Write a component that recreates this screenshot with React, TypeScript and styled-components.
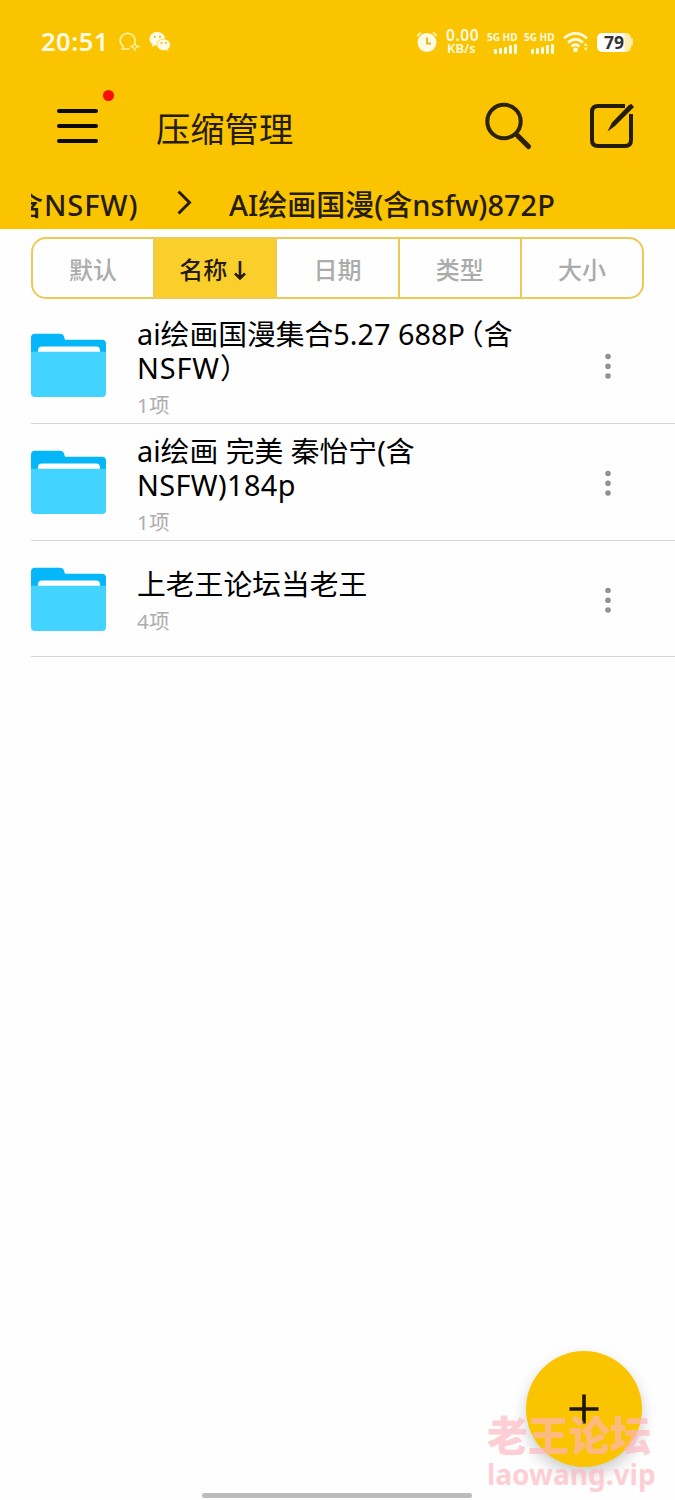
import React from 'react';
import styled, { createGlobalStyle } from 'styled-components';

const Global = createGlobalStyle`
  * { box-sizing: border-box; }
  body { margin: 0; background: #fefefe; }
`;
const Screen = styled.div`
  position: relative;
  width: 675px;
  height: 1500px;
  overflow: hidden;
  background: #fefefe;
  font-family: 'Noto Sans', 'Noto Sans CJK SC', sans-serif;
  color: #000;
`;
const Header = styled.header`
  height: 229px;
  background: #fac400;
  color: #251c05;
`;
const StatusBar = styled.div`
  height: 84px;
  padding: 0 41px 0 41px;
  display: flex;
  align-items: center;
  color: #fffbe2;
`;
const Clock = styled.div`
  font-size: 25.5px;
  font-weight: 600;
  line-height: 30px;
  width: 78px;
  letter-spacing: 0.5px;
  padding-bottom: 2px;
`;
const StatusIcon = styled.svg<{ $gap?: number }>`
  display: block;
  flex: none;
  margin-right: ${p => p.$gap ?? 0}px;
`;
const Speed = styled.div`
  width: 41px;
  font-weight: 600;
  line-height: 13px;
  display: flex;
  flex-direction: column;
`;
const SpeedValue = styled.span`
  font-size: 15.5px;
  letter-spacing: 0.6px;
`;
const SpeedUnit = styled.span`
  font-size: 13px;
  padding-left: 1px;
`;
const Signal = styled.div`
  width: 37px;
  font-size: 10px;
  font-weight: 700;
  line-height: 13px;
  white-space: nowrap;
`;
const Bars = styled.div`
  display: flex;
  align-items: flex-end;
  gap: 2px;
  height: 10px;
  padding-left: 7px;
`;
const Bar = styled.i<{ $h: number }>`
  width: 3px;
  height: ${p => p.$h}px;
  border-radius: 1px;
  background: #fffbe2;
`;
const Battery = styled.div`
  width: 34px;
  height: 19px;
  border-radius: 5px;
  background: linear-gradient(90deg, #fff 75%, #fdeeb0 84%);
  color: #333;
  font-size: 17.5px;
  font-weight: 700;
  line-height: 19px;
  padding-left: 7px;
`;
const BatteryTip = styled.i`
  width: 2px;
  height: 8px;
  border-radius: 0 2px 2px 0;
  background: #fdeeb0;
`;
const Toolbar = styled.div`
  height: 84px;
  display: flex;
  align-items: center;
  padding-left: 55px;
`;
const MenuButton = styled.div`
  position: relative;
  width: 101px;
  height: 84px;
  display: flex;
  align-items: center;
`;
const Dot = styled.i`
  position: absolute;
  left: 48px;
  top: 6px;
  width: 11px;
  height: 11px;
  border-radius: 50%;
  background: #f80d0d;
`;
const Title = styled.h1`
  margin: 5px 0 0;
  width: 328px;
  font-size: 34.3px;
  font-weight: 400;
  line-height: 44px;
`;
const Crumbs = styled.nav`
  margin-left: 31px;
  height: 61px;
  padding-top: 19px;
  display: flex;
  overflow: hidden;
  white-space: nowrap;
`;
const Crumb = styled.span<{ $shift?: number; $w: number; $track?: number }>`
  flex: none;
  width: ${p => p.$w}px;
  margin-left: ${p => p.$shift ?? 0}px;
  letter-spacing: ${p => p.$track ?? 0}px;
  font-size: 29px;
  font-weight: 500;
  line-height: 36px;
`;
const Tabs = styled.div`
  margin: 8px 31px 0 31px;
  height: 62px;
  display: flex;
  border: 2px solid #ecca55;
  border-radius: 15px;
  overflow: hidden;
`;
const Tab = styled.div<{ $active?: boolean }>`
  flex: 1;
  display: flex;
  align-items: center;
  justify-content: center;
  padding-top: 3px;
  font-size: 24px;
  line-height: 34px;
  font-weight: 500;
  color: ${p => (p.$active ? '#251c05' : '#ababab')};
  background: ${p => (p.$active ? '#fbcf2b' : 'transparent')};
  & + & { border-left: 2px solid #ecca55; }
`;
const List = styled.div`
  padding: 8px 0 0 31px;
`;
const Row = styled.div<{ $h: number }>`
  height: ${p => p.$h}px;
  display: flex;
  align-items: center;
  border-bottom: 1.5px solid #d5d5d5;
`;
const Info = styled.div`
  width: 467px;
  margin-left: 31px;
  padding-top: 8px;
`;
const Name = styled.div<{ $track?: number }>`
  font-size: 28.8px;
  line-height: 34px;
  letter-spacing: ${p => p.$track ?? 0}px;
  white-space: nowrap;
`;
const WideParen = styled.span`
  margin-left: -10px;
`;
const Count = styled.div`
  margin-top: 4px;
  font-size: 20.5px;
  line-height: 33px;
  letter-spacing: 0.3px;
  color: #adadad;
`;
const Fab = styled.button`
  position: absolute;
  left: 526px;
  top: 1351px;
  width: 116px;
  height: 116px;
  padding: 0;
  border: 0;
  border-radius: 50%;
  background: #fac400;
  box-shadow: 0 7px 15px rgba(0, 0, 0, 0.2);
  display: flex;
  align-items: center;
  justify-content: center;
`;
const Watermark = styled.div`
  position: absolute;
  left: 487px;
  top: 1409px;
  color: rgba(255, 182, 192, 0.68);
  font-weight: 700;
  white-space: nowrap;
`;
const MarkName = styled.div`
  font-family: 'Noto Sans CJK SC', sans-serif;
  font-weight: 900;
  font-size: 41px;
  line-height: 48px;
`;
const MarkSite = styled.div`
  font-size: 28px;
  line-height: 34px;
`;
const HomeBar = styled.div`
  position: absolute;
  left: 202px;
  top: 1493px;
  width: 270px;
  height: 5px;
  border-radius: 3px;
  background: #bcbcbc;
`;

const Folder = () => (
  <svg width="75" height="64" viewBox="0 0 75 64">
    <path d="M0 22V4.500Q0 .7 4 .7H29Q32 .7 33 3.500L34 6.700H71Q75 6.700 75 10.500V22Z" fill="#05b7f9" />
    <path d="M7 20V17.500Q7 13.500 11 13.500H65Q69 13.500 69 17.500V20Z" fill="#fff" />
    <path d="M0 18.700H75V60Q75 64 71 64H4Q0 64 0 60Z" fill="#42d3ff" />
  </svg>
);
const More = () => (
  <svg width="8" height="32" viewBox="0 0 8 32" fill="#919191">
    <circle cx="4" cy="7.500" r="2.800" /><circle cx="4" cy="17.300" r="2.800" /><circle cx="4" cy="27" r="2.800" />
  </svg>
);
const SignalBlock = () => (
  <Signal>
    <span>5G HD</span>
    <Bars>{[5, 6, 7, 9, 10].map(h => <Bar key={h} $h={h} />)}</Bars>
  </Signal>
);

export default function App() {
  return (
    <Screen>
      <Global />
      <Header>
        <StatusBar>
          <Clock>20:51</Clock>
          <StatusIcon $gap={9} width="21" height="20" viewBox="0 0 21 20" fill="none" stroke="#fff2a0" strokeWidth="1.7">
            <path d="M15.8 10.2A7.4 7.2 0 1 0 4.2 14.3L3.2 17H10.5" />
            <path d="M15.8 10.8L17 13.4L19.8 14.5L17 15.7L15.8 18.2L14.6 15.7L12 14.5L14.6 13.4Z" strokeWidth="1.3" />
          </StatusIcon>
          <StatusIcon $gap={245} width="22" height="22" viewBox="0 0 22 22">
            <path d="M8.3 1C3.8 1 .5 4.2.5 8.1c0 2.3 1 4.1 2.9 5.4L2.8 16l3-1.6 2.5.4c4.4 0 7.8-3 7.8-6.9C16.1 4 12.7 1 8.3 1Z" fill="#fffbe2" />
            <path d="M14.5 8C10.7 8 8 10.5 8 13.7s2.7 5.8 6.5 5.8l2.3-.3 2.7 1.3-.5-2.3c1.5-1 2.4-2.6 2.4-4.5C21.4 10.5 18.5 8 14.5 8Z" fill="#fffbe2" stroke="#fac400" strokeWidth=".7" />
            <g fill="#ddb21a"><circle cx="5.7" cy="5.8" r="1" /><circle cx="11" cy="5.8" r="1" /><circle cx="12.5" cy="12" r=".9" /><circle cx="17" cy="12" r=".9" /></g>
          </StatusIcon>
          <StatusIcon $gap={8} width="22" height="22" viewBox="0 0 22 22">
            <circle cx="11" cy="11.5" r="9.5" fill="#fffbe2" />
            <path d="M1.2 5L5 1.5M17 1.5L20.8 5" stroke="#fff2a0" strokeWidth="2" />
            <path d="M11 6.5V12.5H15" fill="none" stroke="#e0b51d" strokeWidth="1.8" />
          </StatusIcon>
          <Speed><SpeedValue>0.00</SpeedValue><SpeedUnit>KB/s</SpeedUnit></Speed>
          <SignalBlock />
          <SignalBlock />
          <StatusIcon $gap={8} width="28" height="24" viewBox="-2 -1 28 24" fill="none" stroke="#fffbe2" strokeWidth="2.8">
            <path d="M1 7.2Q12.5-2.5 24 7.2" /><path d="M5 11.6Q12.5 5 20 11.6" /><path d="M8.5 15.5Q12.5 12 16.5 15.5" />
            <circle cx="12.5" cy="18.8" r="2.4" fill="#fffbe2" stroke="none" />
            <path d="M20.5 15L22.7 11.5L24.9 15ZM20.5 16.5L22.7 20L24.9 16.5Z" fill="#fff2a0" stroke="none" />
          </StatusIcon>
          <Battery>79</Battery><BatteryTip />
        </StatusBar>
        <Toolbar>
          <MenuButton>
            <svg width="44" height="38" viewBox="0 0 44 38" stroke="#0c0900" strokeWidth="4" strokeLinecap="round">
              <path d="M4 4H41M4 19H41M4 34H41" />
            </svg>
            <Dot />
          </MenuButton>
          <Title>压缩管理</Title>
          <svg width="106" height="52" viewBox="0 0 106 52" fill="none" stroke="#2c2204">
            <circle cx="20" cy="21.5" r="16.7" strokeWidth="4" />
            <path d="M31.5 34L34 36.5" strokeWidth="4" />
            <path d="M34 36L44.5 46.5" strokeWidth="5.2" strokeLinecap="round" />
          </svg>
          <svg width="46" height="50" viewBox="0 0 46 50" fill="none" stroke="#251c05">
            <path d="M35 5H8Q2 5 2 11V39Q2 45 8 45H35Q41 45 41 39V13" strokeWidth="4" />
            <path d="M41.5 3L44 6L25 25L17.5 30.5L22 21.5L39 4Z" fill="#251c05" stroke="none" />
          </svg>
        </Toolbar>
        <Crumbs>
          <Crumb $shift={-17} $w={124} $track={0.9}>含NSFW)</Crumb>
          <svg width="91" height="36" viewBox="0 0 91 36" fill="none" stroke="#251c05" strokeWidth="2.9"><path d="M40.5 4.5L51.5 15.5L40.5 26.5" /></svg>
          <Crumb $w={400}>AI绘画国漫(含nsfw)872P</Crumb>
        </Crumbs>
      </Header>
      <Tabs>
        <Tab>默认</Tab>
        <Tab $active>
          名称
          <svg width="24" height="24" viewBox="0 0 24 24" fill="none" stroke="#251c05" strokeWidth="2.6"><path d="M13 3V20M8 15.5L13 20.5L18 15.5" /></svg>
        </Tab>
        <Tab>日期</Tab>
        <Tab>类型</Tab>
        <Tab>大小</Tab>
      </Tabs>
      <List>
        <Row $h={117}>
          <Folder />
          <Info>
            <Name>ai绘画国漫集合5.27 688P<WideParen>（</WideParen>含</Name>
            <Name $track={0.9}>NSFW）</Name>
            <Count>1项</Count>
          </Info>
          <More />
        </Row>
        <Row $h={117}>
          <Folder />
          <Info>
            <Name>ai绘画 完美 秦怡宁(含</Name>
            <Name $track={0.4}>NSFW)184p</Name>
            <Count>1项</Count>
          </Info>
          <More />
        </Row>
        <Row $h={116}>
          <Folder />
          <Info>
            <Name>上老王论坛当老王</Name>
            <Count>4项</Count>
          </Info>
          <More />
        </Row>
      </List>
      <Fab aria-label="+">
        <svg width="30" height="30" viewBox="0 0 30 30" stroke="#1c1708" strokeWidth="3.6"><path d="M15 .5V29.5M.5 15H29.5" /></svg>
      </Fab>
      <Watermark><MarkName>老王论坛</MarkName><MarkSite>laowang.vip</MarkSite></Watermark>
      <HomeBar />
    </Screen>
  );
}
